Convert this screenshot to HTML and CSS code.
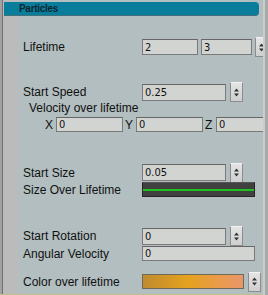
FILE: index.html
```html
<!DOCTYPE html>
<html>
  <head>
    <title>Particles</title>
    <meta charset="UTF-8">
    <link rel="stylesheet" href="styles.css">
  </head>
  <body>
    <div class="frame">
      <div class="main">
        <div class="header">Particles</div>

        <div class="row lifetime">
          <span class="label">Lifetime</span>
          <input class="field min" type="text" value="2"/>
          <input class="field max" type="text" value="3"/>
          <span class="spin"><svg width="7" height="9" viewBox="0 0 7 9"><path d="M3.5 0.5 L6 3.5 L1 3.5 Z M3.5 8.5 L6 5.5 L1 5.5 Z" fill="#333"/></svg></span>
        </div>

        <div class="row speed">
          <span class="label">Start Speed</span>
          <input class="field mid" type="text" value="0.25"/>
          <span class="spin"><svg width="7" height="9" viewBox="0 0 7 9"><path d="M3.5 0.5 L6 3.5 L1 3.5 Z M3.5 8.5 L6 5.5 L1 5.5 Z" fill="#333"/></svg></span>
        </div>
        <div class="sublabel">Velocity over lifetime</div>
        <div class="row xyz">
          <span class="axis">X</span><input class="field axisfield" type="text" value="0"/>
          <span class="axis">Y</span><input class="field axisfield" type="text" value="0"/>
          <span class="axis">Z</span><input class="field axisfield" type="text" value="0"/>
        </div>

        <div class="row size">
          <span class="label">Start Size</span>
          <input class="field mid" type="text" value="0.05"/>
          <span class="spin"><svg width="7" height="9" viewBox="0 0 7 9"><path d="M3.5 0.5 L6 3.5 L1 3.5 Z M3.5 8.5 L6 5.5 L1 5.5 Z" fill="#333"/></svg></span>
        </div>
        <div class="row sizecurve">
          <span class="label">Size Over Lifetime</span>
          <div class="curve"><div class="curveline"></div></div>
        </div>

        <div class="row rotation">
          <span class="label">Start Rotation</span>
          <input class="field mid" type="text" value="0"/>
          <span class="spin"><svg width="7" height="9" viewBox="0 0 7 9"><path d="M3.5 0.5 L6 3.5 L1 3.5 Z M3.5 8.5 L6 5.5 L1 5.5 Z" fill="#333"/></svg></span>
        </div>
        <div class="row angular">
          <span class="label">Angular Velocity</span>
          <input class="field wide" type="text" value="0"/>
        </div>

        <div class="row colour">
          <span class="label">Color over lifetime</span>
          <div class="gradient"></div>
          <span class="spin"><svg width="7" height="9" viewBox="0 0 7 9"><path d="M3.5 0.5 L6 3.5 L1 3.5 Z M3.5 8.5 L6 5.5 L1 5.5 Z" fill="#333"/></svg></span>
        </div>
      </div>
      <div class="rstrip"></div>
      <div class="redge"></div>
    </div>
  </body>
</html>
```

FILE: styles.css
```css
*{
   margin: 0;
   padding: 0;
   box-sizing: border-box;
}

body{
   width: 268px;
   height: 295px;
   overflow: hidden;
   font-family: "Liberation Sans", Arial, sans-serif;
   font-size: 12px;
   color: #111;
}

.frame{
   display: flex;
   height: 295px;
}

.main{
   width: 263px;
   height: 295px;
   overflow: hidden;
   border-bottom: 1px solid #bfc08a;
   background: linear-gradient(to right,
      #a2a2a2 0 2px,
      #707070 2px 3px,
      #bbbbbb 3px 18px,
      #b2bebf 18px);
}

.rstrip{
   width: 2px;
   background: #c6cece;
}

.redge{
   width: 3px;
   background: #a8a8a8;
}

.header{
   margin: 2px 0 0 4px;
   width: 255px;
   height: 14px;
   padding-left: 15px;
   background: #0a7d9d;
   border-bottom: 1px solid #42707a;
   border-radius: 0 4px 4px 0;
   font-size: 10px;
   font-weight: bold;
   letter-spacing: -0.3px;
   line-height: 13px;
   color: #0b2630;
}

.row{
   display: flex;
   align-items: center;
   padding-left: 23px;
}

.label{
   width: 119px;
   flex-shrink: 0;
   white-space: nowrap;
}

.field{
   height: 16px;
   background: #d2d4d2;
   border: 1px solid #7a7a7a;
   border-top-color: #666;
   padding-left: 2px;
   font-family: "DejaVu Sans Condensed", "DejaVu Sans", sans-serif;
   font-size: 11px;
   color: #111;
   outline: none;
   flex-shrink: 0;
}

.spin{
   width: 13px;
   height: 20px;
   flex-shrink: 0;
   display: flex;
   align-items: center;
   justify-content: center;
   background: linear-gradient(#e4e4e4, #cfcfcf);
   border: 1px solid #8c8c8c;
   border-top-color: #f2f2f2;
   border-radius: 1px;
}

.lifetime{
   margin-top: 21px;
   height: 20px;
}

.min{ width: 56px; }
.max{ width: 51px; margin-left: 3px; }
.lifetime .spin{ margin-left: 3px; }

.mid{ width: 84px; height: 17px; margin-right: 4px; }
.wide{ width: 113px; height: 15px; }

.speed{
   margin-top: 25px;
   height: 20px;
}

.sublabel{
   padding-left: 29px;
   height: 14px;
   line-height: 13px;
}

.xyz{
   margin-top: 1px;
   padding-left: 45px;
   height: 15px;
}

.axis{
   width: 11px;
   flex-shrink: 0;
}

.axisfield{
   width: 67px;
   height: 15px;
   margin-right: 2px;
}

.size{
   margin-top: 31px;
   height: 19px;
}

.sizecurve{
   height: 15px;
}

.curve{
   width: 113px;
   height: 15px;
   background: #414141;
   border: 1px solid #262626;
   border-top-color: #555;
   display: flex;
   align-items: center;
}

.curveline{
   width: 100%;
   height: 2px;
   background: #1fc21f;
}

.rotation{
   margin-top: 29px;
   height: 20px;
}

.angular{
   height: 15px;
}

.colour{
   margin-top: 11px;
   height: 19px;
}

.gradient{
   width: 102px;
   height: 15px;
   margin-right: 4px;
   border: 1px solid #6d6a58;
   background: linear-gradient(to right, #c08a30, #e4a21f 45%, #eb9a50 80%, #e9976a);
}
```
